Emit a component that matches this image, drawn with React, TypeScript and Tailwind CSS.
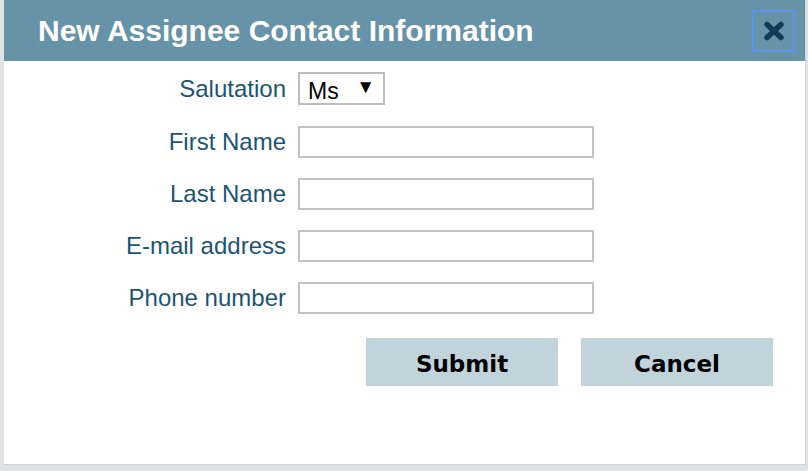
import React from "react";

const fields = ["First Name", "Last Name", "E-mail address", "Phone number"];

const Label = ({ text }: { text: string }) => (
  <label className="text-right text-[24px] leading-none text-[#1c5473]">
    {text}
  </label>
);

function App() {
  return (
    <div className="w-[808px] h-[471px] bg-[#dfe3e6] pl-[4px] overflow-hidden font-['Liberation_Sans',Arial,sans-serif]">
      <div className="w-[802px] h-[465px] bg-white flex flex-col border-r border-b border-[#cfd5d9]">
        <header className="h-[61px] bg-[#6793a8] flex items-center justify-between pl-[34px] pr-[10px]">
          <h1 className="text-white font-bold text-[30px] leading-none">
            New Assignee Contact Information
          </h1>
          <button className="w-[43px] h-[42px] border-2 border-[#5b93ea] flex items-center justify-center">
            <svg width="22" height="20" viewBox="0 0 22 20">
              <path
                d="M4 3.5 L18 16.5 M18 3.5 L4 16.5"
                stroke="#0f3b58"
                strokeWidth="5.5"
                strokeLinecap="round"
              />
            </svg>
          </button>
        </header>

        <form className="grid grid-cols-[282px_auto] gap-x-[12px] gap-y-[20px] pt-[11px] items-center justify-start">
          <Label text="Salutation" />
          <div className="relative w-[87px] h-[33px] mb-[1px]">
            <select
              defaultValue="Ms"
              className="appearance-none w-full h-full border-2 border-[#bdbdbd] bg-white pl-[8px] text-[23px] text-black outline-none"
            >
              <option>Ms</option>
              <option>Mr</option>
              <option>Mrs</option>
              <option>Dr</option>
            </select>
            <span className="pointer-events-none absolute right-[10px] top-[4px] text-[19px] leading-[22px] text-black">
              ▼
            </span>
          </div>
          {fields.map((f) => (
            <React.Fragment key={f}>
              <Label text={f} />
              <input
                type="text"
                className="w-[296px] h-[32px] border-2 border-[#c2c2c2] bg-white px-2 text-[20px] outline-none"
              />
            </React.Fragment>
          ))}
        </form>

        <div className="flex justify-end gap-[23px] pr-[32px] pt-[24px]">
          <button className="w-[192px] h-[48px] pt-[4px] bg-[#c1d3db] text-black font-bold text-[23px] font-['DejaVu_Sans',sans-serif]">
            Submit
          </button>
          <button className="w-[192px] h-[48px] pt-[4px] bg-[#c1d3db] text-black font-bold text-[23px] font-['DejaVu_Sans',sans-serif]">
            Cancel
          </button>
        </div>
      </div>
    </div>
  );
}

export default App;
